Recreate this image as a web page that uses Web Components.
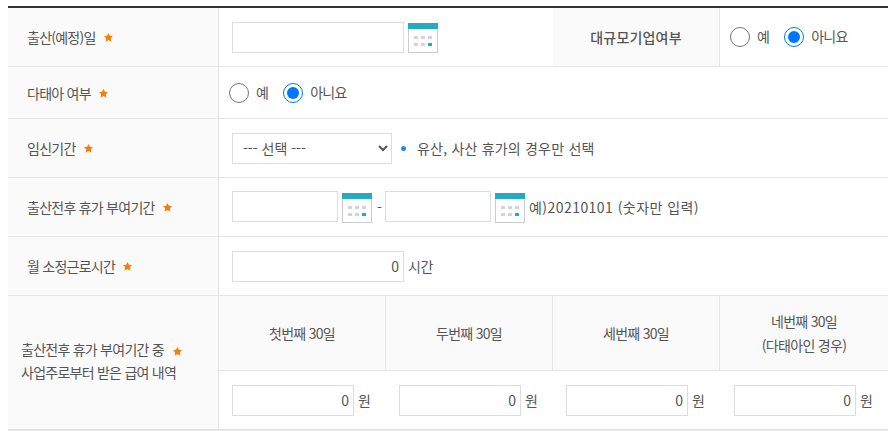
<!DOCTYPE html>
<html lang="ko">
<head>
<meta charset="utf-8">
<title>출산전후 휴가</title>
<style>
  html, body { margin: 0; padding: 0; background: #fff; }
  body {
    padding: 6px 7px 0 8px;
    font: 14px/20px "Noto Sans CJK KR", "Noto Sans", sans-serif;
    color: #555;
    letter-spacing: -0.4px;
    overflow: hidden;
  }
</style>
</head>
<body>
<leave-table>
  <form-row style="--h:58px">
    <row-label required>출산(예정)일</row-label>
    <row-cell wide><date-field width="172"></date-field></row-cell>
    <row-label center>대규모기업여부</row-label>
    <row-cell last><yes-no name="large"></yes-no></row-cell>
  </form-row>
  <form-row style="--h:51px">
    <row-label required>다태아 여부</row-label>
    <row-cell flush><yes-no name="multi"></yes-no></row-cell>
  </form-row>
  <form-row style="--h:58px">
    <row-label required>임신기간</row-label>
    <row-cell><period-select></period-select><hint-note>유산, 사산 휴가의 경우만 선택</hint-note></row-cell>
  </form-row>
  <form-row style="--h:58px">
    <row-label required>출산전후 휴가 부여기간</row-label>
    <row-cell>
      <date-field width="106" drop="2"></date-field>
      <span style="margin:0 5px 0 5px;width:3px">-</span>
      <date-field width="106" drop="2"></date-field>
      <span style="margin-left:4px;letter-spacing:.45px">예)20210101 (숫자만 입력)</span>
    </row-cell>
  </form-row>
  <form-row style="--h:58px">
    <row-label required>월 소정근로시간</row-label>
    <row-cell><amount-field width="172" unit="시간"></amount-field></row-cell>
  </form-row>
  <pay-row></pay-row>
</leave-table>

<script>
  // small helper so each element gets its own open shadow root
  class BaseEl extends HTMLElement {
    constructor() {
      super();
      this.attachShadow({ mode: 'open' });
    }
  }

  const STAR = `<svg class="star" width="9" height="9" viewBox="0 0 10 10"><path fill="#f57f0a" d="M5 0l1.600 3.100 3.400.4-2.400 2.400.7 3.700L5 7.900 1.700 9.600l.7-3.700L0 3.500l3.400-.4z"/></svg>`;

  class LeaveTable extends BaseEl {
    connectedCallback() {
      this.shadowRoot.innerHTML = `
        <style>
          :host { display: block; width: 880px; border-top: 2px solid #333; border-bottom: 2px solid #e5e5e5; }
        </style>
        <slot></slot>`;
    }
  }

  class FormRow extends BaseEl {
    connectedCallback() {
      this.shadowRoot.innerHTML = `
        <style>
          :host { display: flex; height: var(--h); border-bottom: 1px solid #e5e5e5; box-sizing: content-box; }
        </style>
        <slot></slot>`;
    }
  }

  class RowLabel extends BaseEl {
    connectedCallback() {
      const star = this.hasAttribute('required') ? STAR : '';
      this.shadowRoot.innerHTML = `
        <style>
          :host {
            display: flex; align-items: center; box-sizing: border-box;
            width: 211px; flex: none; padding-left: 19px; letter-spacing: -0.75px;
            background: #fafafa; border-right: 1px solid #e5e5e5; color: #555;
          }
          :host([center]) { width: 167px; padding-left: 0; justify-content: center; font-weight: 500; letter-spacing: 0.2px; }
          .star { margin-left: 8px; margin-top: 1px; }
        </style>
        <slot></slot>${star}`;
    }
  }

  class RowCell extends BaseEl {
    connectedCallback() {
      this.shadowRoot.innerHTML = `
        <style>
          :host { display: flex; align-items: center; flex: 1; min-width: 0; padding-left: 13px; }
          :host([wide]) { flex: none; width: 334px; box-sizing: border-box; }
          :host([flush]) { padding-left: 10px; }
          :host([last]) { padding-left: 10px; }
        </style>
        <slot></slot>`;
    }
  }

  class TextBox extends BaseEl {
    connectedCallback() {
      const w = this.getAttribute('width');
      const val = this.getAttribute('value');
      this.shadowRoot.innerHTML = `
        <style>
          :host { display: block; flex: none; }
          input {
            display: block; box-sizing: border-box; width: ${w}px; height: 31px;
            border: 1px solid #ddd; background: #fff; padding: 0 4px;
            font: inherit; letter-spacing: 0; color: #555; text-align: right; outline: 0;
          }
        </style>
        <input type="text" value="${val || ''}">`;
    }
  }

  class CalendarIcon extends BaseEl {
    connectedCallback() {
      this.shadowRoot.innerHTML = `
        <style>
          :host { display: block; flex: none; width: 30px; height: 30px; }
          svg { display: block; }
        </style>
        <svg width="30" height="30" viewBox="0 0 30 30">
          <rect x="0.500" y="0.500" width="29" height="29" fill="#fff" stroke="#ccc"/>
          <rect width="30" height="6" fill="#23abc3"/>
          <g fill="#d4d4d4">
            <rect x="6" y="13" width="4" height="3"/><rect x="13" y="13" width="4" height="3"/><rect x="20" y="13" width="4" height="3"/>
            <rect x="6" y="20" width="4" height="3"/><rect x="13" y="20" width="4" height="3"/>
          </g>
          <rect x="20" y="20" width="4" height="3" fill="#23abc3"/>
        </svg>`;
    }
  }

  class DateField extends BaseEl {
    connectedCallback() {
      const w = this.getAttribute('width');
      const drop = this.getAttribute('drop') || 1;
      this.shadowRoot.innerHTML = `
        <style>
          :host { display: flex; align-items: flex-start; gap: 4px; flex: none; }
          calendar-icon { margin-top: ${drop}px; }
        </style>
        <text-box width="${w}"></text-box><calendar-icon></calendar-icon>`;
    }
  }

  class AmountField extends BaseEl {
    connectedCallback() {
      const w = this.getAttribute('width');
      this.shadowRoot.innerHTML = `
        <style>
          :host { display: flex; align-items: center; gap: 4px; flex: none; }
        </style>
        <text-box width="${w}" value="0"></text-box><span>${this.getAttribute('unit')}</span>`;
    }
  }

  class YesNo extends BaseEl {
    connectedCallback() {
      const n = this.getAttribute('name');
      this.shadowRoot.innerHTML = `
        <style>
          :host { display: flex; align-items: center; letter-spacing: -0.7px; }
          label { display: flex; align-items: center; margin-right: 15px; }
          input { width: 20px; height: 20px; margin: 0 7px 0 0; }
          span { position: relative; top: -1px; }
        </style>
        <label><input type="radio" name="${n}"><span>예</span></label>
        <label><input type="radio" name="${n}" checked><span>아니요</span></label>`;
    }
  }

  class PeriodSelect extends BaseEl {
    connectedCallback() {
      this.shadowRoot.innerHTML = `
        <style>
          :host { display: block; flex: none; }
          select {
            display: block; box-sizing: border-box; width: 160px; height: 31px;
            border: 1px solid #ddd; background: #fff; padding: 0 6px;
            font: inherit; letter-spacing: 0; color: #555; outline: 0;
          }
        </style>
        <select><option>--- 선택 ---</option></select>`;
    }
  }

  class HintNote extends BaseEl {
    connectedCallback() {
      this.shadowRoot.innerHTML = `
        <style>
          :host { display: flex; align-items: center; margin-left: 9px; letter-spacing: 0.2px; }
          i { width: 5px; height: 5px; border-radius: 50%; background: #1b8ee8; margin-right: 11px; }
        </style>
        <i></i><slot></slot>`;
    }
  }

  class PayRow extends BaseEl {
    connectedCallback() {
      const heads = ['첫번째 30일', '두번째 30일', '세번째 30일', '네번째 30일<br>(다태아인 경우)'];
      this.shadowRoot.innerHTML = `
        <style>
          :host { display: flex; height: 133px; }
          .label {
            box-sizing: border-box; width: 211px; flex: none; padding: 0 0 3px 13px;
            display: flex; flex-direction: column; justify-content: center;
            background: #fafafa; border-right: 1px solid #e5e5e5; line-height: 23px; letter-spacing: -0.75px;
          }
          .star { margin-left: 3px; position: relative; top: 1px; }
          .grid { flex: 1; display: grid; grid-template-columns: 167px 167px 167px 168px; grid-template-rows: 75px 58px; }
          .head {
            display: flex; align-items: center; justify-content: center; text-align: center;
            background: #fafafa; border-bottom: 1px solid #e5e5e5; border-right: 1px solid #e5e5e5;
            line-height: 24px; box-sizing: border-box; letter-spacing: -0.7px;
          }
          .head:nth-child(4) { border-right: 0; }
          .val { display: flex; align-items: center; padding-left: 13px; }
          .val:last-child { padding-left: 14px; }
        </style>
        <div class="label"><div>출산전후 휴가 부여기간 중 &nbsp;${STAR}</div><div>사업주로부터 받은 급여 내역</div></div>
        <div class="grid">
          ${heads.map(h => `<div class="head"><div>${h}</div></div>`).join('')}
          ${heads.map(() => `<div class="val"><amount-field width="122" unit="원"></amount-field></div>`).join('')}
        </div>`;
    }
  }

  customElements.define('leave-table', LeaveTable);
  customElements.define('form-row', FormRow);
  customElements.define('row-label', RowLabel);
  customElements.define('row-cell', RowCell);
  customElements.define('text-box', TextBox);
  customElements.define('calendar-icon', CalendarIcon);
  customElements.define('date-field', DateField);
  customElements.define('amount-field', AmountField);
  customElements.define('yes-no', YesNo);
  customElements.define('period-select', PeriodSelect);
  customElements.define('hint-note', HintNote);
  customElements.define('pay-row', PayRow);
</script>
</body>
</html>
